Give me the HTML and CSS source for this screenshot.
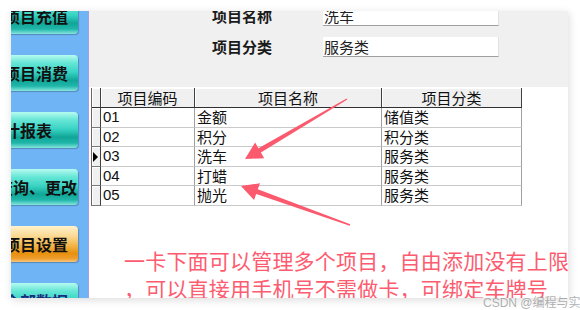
FILE: index.html
```html
<!DOCTYPE html>
<html lang="zh">
<head>
  <meta charset="UTF-8">
  <title>项目设置</title>
  <link rel="stylesheet" href="styles.css">
</head>
<body>
  <div class="shot">
    <aside class="side">
      <div class="side-list">
        <div class="btn">项目充值</div>
        <div class="btn">项目消费</div>
        <div class="btn btn-short">统计报表</div>
        <div class="btn btn-long">查询、更改</div>
        <div class="btn btn-on">项目设置</div>
        <div class="btn btn-blue">全部数据</div>
      </div>
    </aside>

    <main class="main">
      <div class="form">
        <div class="form-grid">
          <div class="label">项目名称</div>
          <div class="field">洗车</div>
          <div class="label">项目分类</div>
          <div class="field">服务类</div>
        </div>
      </div>

      <div class="table">
        <div class="hd"></div>
        <div class="hd">项目编码</div>
        <div class="hd">项目名称</div>
        <div class="hd">项目分类</div>

        <div class="rh"></div>
        <div class="cell num">01</div>
        <div class="cell">金额</div>
        <div class="cell">储值类</div>

        <div class="rh"></div>
        <div class="cell num">02</div>
        <div class="cell">积分</div>
        <div class="cell">积分类</div>

        <div class="rh"><span class="cur"></span></div>
        <div class="cell num">03</div>
        <div class="cell">洗车</div>
        <div class="cell">服务类</div>

        <div class="rh"></div>
        <div class="cell num">04</div>
        <div class="cell">打蜡</div>
        <div class="cell">服务类</div>

        <div class="rh"></div>
        <div class="cell num">05</div>
        <div class="cell">抛光</div>
        <div class="cell">服务类</div>
      </div>

      <p class="note">
        <span>一卡下面可以管理多个项目，自由添加没有上限</span>
        <span>，可以直接用手机号不需做卡，可绑定车牌号</span>
      </p>
    </main>

    <!-- 标注箭头 -->
    <svg class="arrows" viewBox="11 11 557 287" width="557" height="287">
      <polygon points="347.4,99.4 260.9,152.5 264.2,158.2 245,159 255.1,142.6 258.4,148.2 346.6,98.6"/>
      <polygon points="349.7,225.8 256.2,194.1 254,200.1 241,186 260,183.3 257.8,189.3 350.3,224.2"/>
    </svg>
  </div>

  <div class="mark">CSDN @编程与实例</div>
</body>
</html>
```

FILE: styles.css
```css
body {
  margin: 0;
  position: relative;
  width: 580px;
  height: 310px;
  overflow: hidden;
  background: #fff;
  font-family: "Noto Sans CJK SC", sans-serif;
}

.shot {
  position: relative;
  display: flex;
  width: 557px;
  height: 287px;
  margin: 11px 0 0 11px;
  overflow: hidden;
  background: #fff;
  box-shadow: 1px 2px 8px rgba(0,0,0,0.14);
}

/* 左侧菜单 */
.side {
  flex: none;
  width: 77px;
  background: #6fb4f4;
  border-right: 1px solid #a49fe0;
}

.side-list {
  display: flex;
  flex-direction: column;
  gap: 21px;
  margin-top: -13px;
}

.btn {
  display: flex;
  justify-content: flex-end;
  align-items: center;
  box-sizing: border-box;
  width: 80px;
  height: 36px;
  margin-left: -13px;
  padding-right: 10px;
  border-radius: 4px;
  background: linear-gradient(to bottom, #b6fbef 0%, #66e6d6 22%, #38d2c2 48%, #10a597 70%, #1fb6a9 86%, #86e6dc 100%);
  box-shadow: 1px 1px 1px rgba(40,60,90,0.35);
  color: #111;
  font-size: 16px;
  font-weight: 700;
  line-height: 36px;
  white-space: nowrap;
}

.btn-short { padding-right: 26px; }
.btn-long { padding-right: 1px; }

.btn-on {
  background: linear-gradient(to bottom, #fff2cc 0%, #fbd993 28%, #f2b446 55%, #e8900e 76%, #ee9d2c 90%, #f7c57a 100%);
}

.btn-blue { color: #1c2a80; }

/* 右侧内容 */
.main {
  flex: 1;
  display: flex;
  flex-direction: column;
}

.form {
  flex: none;
  height: 76px;
  overflow: hidden;
  background: #f0f0f0;
}

.form-grid {
  display: grid;
  grid-template-columns: 111px 176px;
  grid-auto-rows: 20px;
  row-gap: 11px;
  margin-top: -5px;
  padding-left: 123px;
}

.label {
  font-size: 15px;
  font-weight: 700;
  line-height: 20px;
  color: #1a1a1a;
}

.field {
  box-sizing: border-box;
  padding-left: 1px;
  background: #fff;
  border-bottom: 1px solid #a0a0a0;
  border-right: 1px solid #e2e2e2;
  font-size: 15px;
  line-height: 19px;
  color: #222;
}

.table {
  display: grid;
  grid-template-columns: 9px 94px 187px 140px;
  grid-template-rows: 20px 20px 19px 20px 19px 20px;
  width: max-content;
  margin: 1px 0 0 2px;
  border-left: 1px solid #6a6a6a;
  font-size: 15px;
  color: #111;
}

.table > div {
  box-sizing: border-box;
  overflow: hidden;
  white-space: nowrap;
}

.hd {
  background: #f0f0f0;
  border-right: 1px solid #404040;
  border-bottom: 1px solid #303030;
  box-shadow: inset 1px 1px #fff;
  text-align: center;
  line-height: 19px;
}

.rh {
  display: flex;
  align-items: center;
  background: #f0f0f0;
  border-right: 1px solid #404040;
  border-bottom: 1px solid #7a7a7a;
  box-shadow: inset 1px 1px #fff;
}

.cur {
  width: 0;
  height: 0;
  margin-left: 1px;
  border-left: 5px solid #000;
  border-top: 5px solid transparent;
  border-bottom: 5px solid transparent;
}

.cell {
  padding-left: 2px;
  background: #fff;
  border-right: 1px solid #a0a0a0;
  border-bottom: 1px solid #cacaca;
  line-height: 18px;
}

.num {
  font-family: "Liberation Sans", "Noto Sans CJK SC", sans-serif;
}

.note {
  margin: 40px 0 0;
  padding-left: 35px;
  color: #fd5c70;
  font-size: 21px;
  line-height: 28px;
  letter-spacing: 0.2px;
  white-space: nowrap;
}

.note span {
  display: block;
}

.arrows {
  position: absolute;
  left: 0;
  top: 0;
  fill: #fb5a6e;
}

.mark {
  position: absolute;
  left: 483px;
  top: 293px;
  font-family: "Liberation Sans", "Noto Sans CJK SC", sans-serif;
  font-size: 12px;
  color: rgba(150,150,150,0.75);
  white-space: nowrap;
}
```
